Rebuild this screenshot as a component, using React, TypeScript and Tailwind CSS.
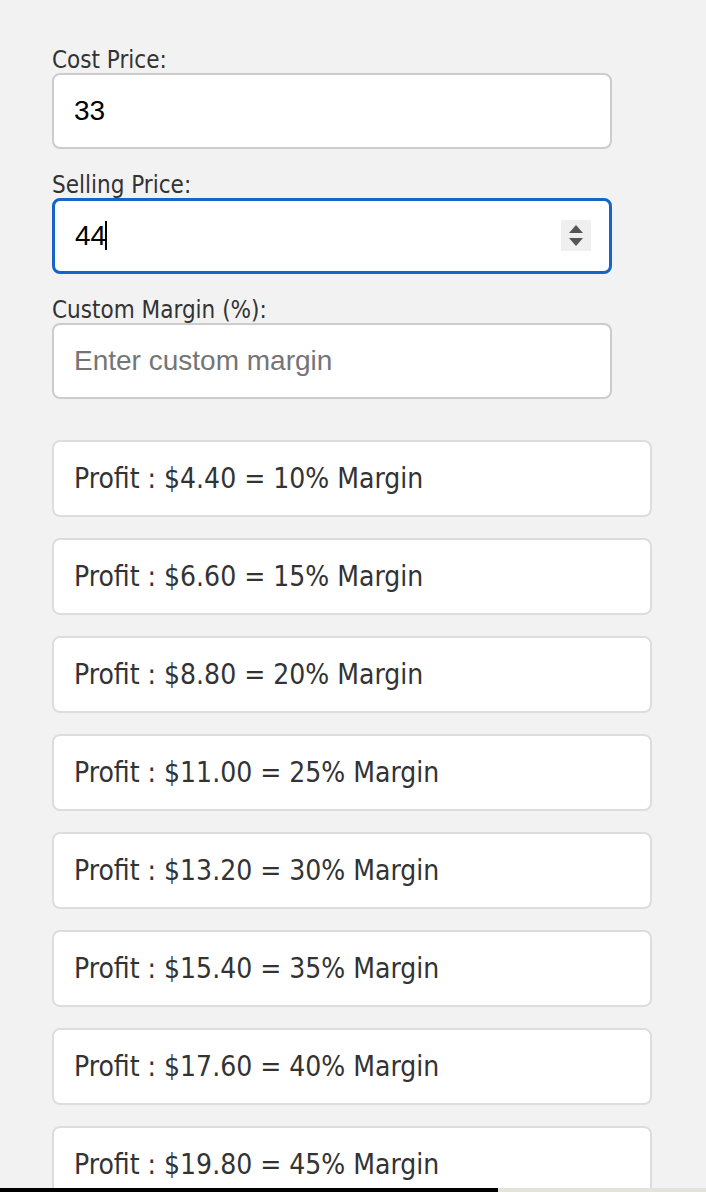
import { useState } from "react";

const margins = [10, 15, 20, 25, 30, 35, 40, 45];

export default function App() {
  const [cost, setCost] = useState("33");
  const [selling, setSelling] = useState("44");
  const [custom, setCustom] = useState("");

  const sp = parseFloat(selling) || 0;

  return (
    <div className="h-[1192px] flex flex-col bg-[#f2f2f2] overflow-hidden">
      <div className="flex-1 overflow-hidden pl-[52px] pt-[47px]">
        {/* Inputs */}
        <div className="w-[560px]">
          <label className="block h-[26px] text-[24px] leading-[26px] text-[#333] font-['DejaVu_Sans_Condensed','DejaVu_Sans',sans-serif]">
            Cost Price:
          </label>
          <input
            type="text"
            value={cost}
            onChange={(e) => setCost(e.target.value)}
            className="block w-full h-[76px] mb-[23px] px-5 bg-white border-2 border-[#cccccc] rounded-lg text-[28px] text-black outline-none font-['Liberation_Sans',Arial,sans-serif]"
          />

          <label className="block h-[26px] text-[24px] leading-[26px] text-[#333] font-['DejaVu_Sans_Condensed','DejaVu_Sans',sans-serif]">
            Selling Price:
          </label>
          <div className="relative mb-[23px]">
            <input
              type="text"
              value={selling}
              onChange={(e) => setSelling(e.target.value)}
              className="block w-full h-[76px] px-5 bg-white border-[3px] border-[#1565c8] rounded-lg text-[28px] text-black outline-none font-['Liberation_Sans',Arial,sans-serif]"
            />
            {/* caret */}
            <span className="absolute left-[53px] top-[23px] w-[2px] h-[29px] bg-black" />
            {/* spinner */}
            <span className="absolute right-[21px] top-[22px] w-[30px] h-[31px] bg-[#efefef] flex flex-col items-center justify-center gap-[5px]">
              <svg width="14" height="8" viewBox="0 0 14 8">
                <path d="M7 0 L14 8 L0 8 Z" fill="#555" />
              </svg>
              <svg width="14" height="8" viewBox="0 0 14 8">
                <path d="M0 0 L14 0 L7 8 Z" fill="#555" />
              </svg>
            </span>
          </div>

          <label className="block h-[26px] text-[24px] leading-[26px] text-[#333] font-['DejaVu_Sans_Condensed','DejaVu_Sans',sans-serif]">
            Custom Margin (%):
          </label>
          <input
            type="text"
            value={custom}
            onChange={(e) => setCustom(e.target.value)}
            placeholder="Enter custom margin"
            className="block w-full h-[76px] px-5 bg-white border-2 border-[#cccccc] rounded-lg text-[28px] text-black placeholder:text-[#757575] outline-none font-['Liberation_Sans',Arial,sans-serif]"
          />
        </div>

        {/* Results */}
        <div className="mt-[41px] w-[600px] flex flex-col gap-[21px]">
          {margins.map((m) => (
            <div
              key={m}
              className="h-[77px] shrink-0 flex items-center px-5 bg-white border-2 border-[#dddddd] rounded-lg text-[28px] text-[#333] font-['DejaVu_Sans_Condensed','DejaVu_Sans',sans-serif]"
            >
              Profit : ${((sp * m) / 100).toFixed(2)} = {m}% Margin
            </div>
          ))}
        </div>
      </div>

      {/* bottom progress strip */}
      <div className="h-[4px] flex">
        <div className="w-[498px] bg-black" />
        <div className="flex-1 bg-[#e3e3db]" />
      </div>
    </div>
  );
}
